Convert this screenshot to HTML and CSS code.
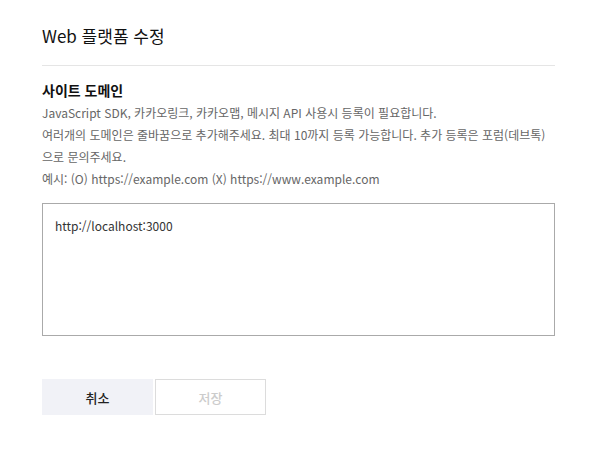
FILE: index.html
```html
<!DOCTYPE html>
<html lang="ko">
<head>
<meta charset="utf-8">
<link rel="stylesheet" href="styles.css">
</head>
<body>
<div class="page">
  <h1 class="title">Web 플랫폼 수정</h1>
  <section class="section">
    <h2 class="heading">사이트 도메인</h2>
    <p class="desc">JavaScript SDK, 카카오링크, 카카오맵, 메시지 API 사용시 등록이 필요합니다.<br>여러개의 도메인은 줄바꿈으로 추가해주세요. 최대 10까지 등록 가능합니다. 추가 등록은 포럼(데브톡)으로 문의주세요.<br>예시: (O) https://example.com (X) https://www.example.com</p>
    <div class="textarea">http://localhost:3000</div>
  </section>
  <div class="actions">
    <button class="btn btn-cancel">취소</button>
    <button class="btn btn-save">저장</button>
  </div>
</div>
</body>
</html>
```
FILE: styles.css
```css
html, body {
  margin: 0;
  padding: 0;
  background: #fff;
}
body {
  font-family: "Noto Sans CJK KR", "Noto Sans", sans-serif;
  color: #333;
}
.page {
  width: 513px;
  padding: 22px 0 0 42px;
}
.title {
  margin: 0;
  font-size: 17px;
  font-weight: 400;
  line-height: 28px;
  color: #111;
  padding-bottom: 15px;
  border-bottom: 1px solid #e5e5e5;
}
.section {
  padding-top: 13px;
}
.heading {
  margin: 0;
  font-size: 14px;
  font-weight: 700;
  line-height: 22px;
  color: #111;
}
.desc {
  margin: 1px 0 0;
  font-size: 12px;
  line-height: 22px;
  color: #666;
}
.textarea {
  margin-top: 13px;
  box-sizing: border-box;
  height: 133px;
  border: 1px solid #aaa;
  padding: 11px 12px;
  font-size: 12px;
  line-height: 22px;
  color: #333;
}
.actions {
  display: flex;
  gap: 2px;
  margin-top: 43px;
}
.btn {
  box-sizing: border-box;
  width: 111px;
  height: 36px;
  font-family: inherit;
  font-size: 13px;
  padding: 0;
  cursor: pointer;
}
.btn-cancel {
  background: #f1f2f7;
  border: none;
  color: #222;
  font-weight: 500;
}
.btn-save {
  background: #fff;
  border: 1px solid #dcdcdc;
  color: #ccc;
  font-weight: 500;
}
```
